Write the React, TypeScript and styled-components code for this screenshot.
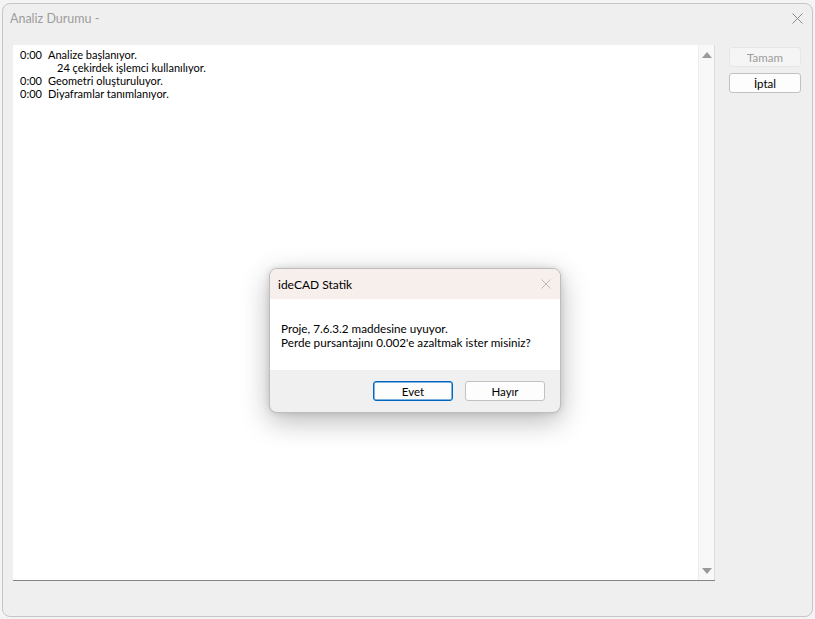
import React from "react";
import styled, { createGlobalStyle } from "styled-components";

const Global = createGlobalStyle`
  html, body { margin: 0; padding: 0; background: #f4f4f4; }
  body { font-family: "Segoe UI", Lato, "Noto Sans", sans-serif; font-size: 12px; color: #000; }
  * { box-sizing: border-box; }
`;

const Page = styled.div`
  width: 815px;
  height: 619px;
  padding: 3px 2px 3px 2px;
  overflow: hidden;
`;

const Window = styled.div`
  position: relative;
  width: 811px;
  height: 614px;
  border: 1px solid #c6c6c6;
  border-radius: 8px;
  background: #efefef;
  display: flex;
  flex-direction: column;
`;

const TitleBar = styled.div`
  height: 29px;
  display: flex;
  align-items: center;
  justify-content: space-between;
  padding: 0 9px 0 7px;
  color: #9d9d9d;
  font-size: 12.5px;
`;

const Body = styled.div`
  margin-top: 12px;
  padding-left: 10px;
  display: flex;
  gap: 14px;
`;

const ListBox = styled.div`
  width: 702px;
  height: 536px;
  background: #fff;
  border-bottom: 1px solid #858585;
  display: flex;
`;

const LogArea = styled.div`
  flex: 1;
  padding: 3px 7px;
  font-size: 11px;
  line-height: 13px;
`;

const LogLine = styled.div<{ $indent?: boolean }>`
  display: grid;
  grid-template-columns: 28px auto;
  white-space: pre;
  padding-left: ${(p) => (p.$indent ? "9px" : "0")};
`;

const ScrollTrack = styled.div`
  width: 17px;
  border-left: 1px solid #ececec;
  border-right: 1px solid #dcdcdc;
  background: #f8f8f8;
  display: flex;
  flex-direction: column;
  justify-content: space-between;
  align-items: center;
  padding: 7px 0 6px;
`;

const Arrow = styled.div<{ $down?: boolean }>`
  width: 0;
  height: 0;
  border-left: 5px solid transparent;
  border-right: 5px solid transparent;
  ${(p) =>
    p.$down
      ? "border-top: 6px solid #9a9a9a;"
      : "border-bottom: 6px solid #9a9a9a;"}
`;

const SideButtons = styled.div`
  margin-top: 2px;
  display: flex;
  flex-direction: column;
  gap: 6px;
`;

const Button = styled.div<{ $disabled?: boolean; $primary?: boolean; $w?: number }>`
  width: ${(p) => p.$w ?? 72}px;
  height: 20px;
  border-radius: 3px;
  display: flex;
  align-items: center;
  justify-content: center;
  font-size: 11.5px;
  background: ${(p) => (p.$disabled ? "#f5f5f5" : "#fdfdfd")};
  color: ${(p) => (p.$disabled ? "#9d9d9d" : "#000")};
  border: 1px solid
    ${(p) => (p.$primary ? "#0067c0" : p.$disabled ? "#e6e6e6" : "#c2c2c2")};
  box-shadow: ${(p) => (p.$primary ? "inset 0 0 0 0.5px #0067c0" : "none")};
`;

const Dialog = styled.div`
  position: absolute;
  left: 266px;
  top: 264px;
  width: 292px;
  height: 145px;
  border: 1px solid #bdbdbd;
  border-radius: 8px;
  overflow: hidden;
  display: flex;
  flex-direction: column;
  box-shadow: 0 8px 28px rgba(0, 0, 0, 0.28), 0 0 6px rgba(0, 0, 0, 0.12);
  background: #f0f0f0;
`;

const DialogTitle = styled.div`
  height: 30px;
  background: #f7efeb;
  display: flex;
  align-items: center;
  justify-content: space-between;
  padding: 0 9px 0 8px;
  font-size: 12px;
`;

const DialogContent = styled.div`
  height: 71px;
  background: #fff;
  padding: 22px 11px 0;
  font-size: 11.7px;
  line-height: 14px;
  white-space: nowrap;
`;

const DialogFooter = styled.div`
  flex: 1;
  display: flex;
  justify-content: flex-end;
  align-items: flex-start;
  gap: 12px;
  padding: 11px 15px 0 0;
`;

const CloseIcon = ({ color, size }: { color: string; size: number }) => (
  <svg width={size} height={size} viewBox="0 0 11 11">
    <path d="M0.5 0.5 L10.5 10.5 M10.5 0.5 L0.5 10.5" stroke={color} strokeWidth="1" />
  </svg>
);

export default function App() {
  return (
    <>
      <Global />
      <Page>
        <Window>
          <TitleBar>
            <span>Analiz Durumu -</span>
            <CloseIcon color="#8a8a8a" size={11} />
          </TitleBar>
          <Body>
            <ListBox>
              <LogArea>
                <LogLine><span>0:00</span><span>Analize başlanıyor.</span></LogLine>
                <LogLine $indent><span></span><span>24 çekirdek işlemci kullanılıyor.</span></LogLine>
                <LogLine><span>0:00</span><span>Geometri oluşturuluyor.</span></LogLine>
                <LogLine><span>0:00</span><span>Diyaframlar tanımlanıyor.</span></LogLine>
              </LogArea>
              <ScrollTrack>
                <Arrow />
                <Arrow $down />
              </ScrollTrack>
            </ListBox>
            <SideButtons>
              <Button $disabled>Tamam</Button>
              <Button>İptal</Button>
            </SideButtons>
          </Body>
          <Dialog>
            <DialogTitle>
              <span>ideCAD Statik</span>
              <CloseIcon color="#b5b5b5" size={10} />
            </DialogTitle>
            <DialogContent>
              <div>Proje, 7.6.3.2 maddesine uyuyor.</div>
              <div>Perde pursantajını 0.002'e azaltmak ister misiniz?</div>
            </DialogContent>
            <DialogFooter>
              <Button $primary $w={80}>Evet</Button>
              <Button $w={80}>Hayır</Button>
            </DialogFooter>
          </Dialog>
        </Window>
      </Page>
    </>
  );
}
